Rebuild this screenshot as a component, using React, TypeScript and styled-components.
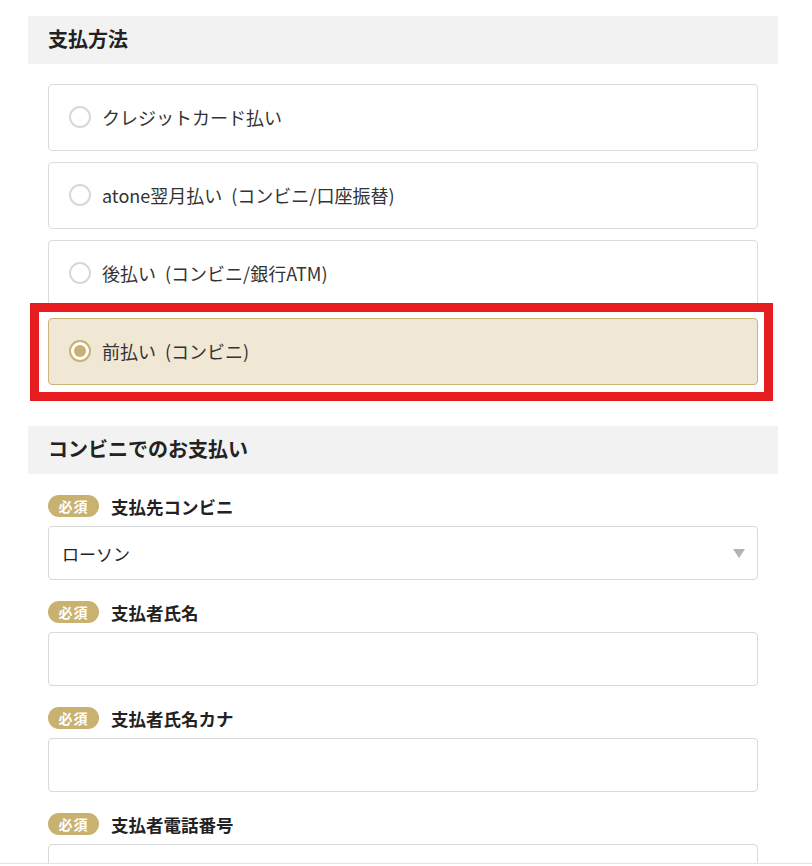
import React from "react";
import styled, { createGlobalStyle } from "styled-components";

const Global = createGlobalStyle`
  html, body { margin: 0; padding: 0; background: #fff; }
  body {
    font-family: "Noto Sans CJK JP", "Noto Sans", sans-serif;
    color: #333;
  }
  * { box-sizing: border-box; }
`;

const Page = styled.div`
  width: 750px;
  margin-left: 28px;
  padding-top: 16px;
`;

const SectionHeader = styled.h2<{ $top?: number }>`
  margin: ${(p) => p.$top ?? 0}px 0 0;
  height: 48px;
  background: #f2f2f2;
  display: flex;
  align-items: center;
  padding: 0 20px 3px;
  font-size: 20px;
  font-weight: 700;
  color: #222;
`;

const OptionList = styled.div`
  display: flex;
  flex-direction: column;
  gap: 11px;
  padding: 20px 20px 0;
`;

const Option = styled.label<{ $selected?: boolean }>`
  position: relative;
  display: flex;
  align-items: center;
  gap: 11px;
  height: 67px;
  padding: 0 20px 1px;
  border: 1px solid ${(p) => (p.$selected ? "#cdb57a" : "#dcdcdc")};
  border-radius: 4px;
  background: ${(p) => (p.$selected ? "#f0e7d5" : "#fff")};
  font-size: 18px;
  word-spacing: 5px;
  color: #333;
  cursor: pointer;
`;

const OptionText = styled.span`
  white-space: pre;
`;

const Radio = styled.span<{ $checked?: boolean }>`
  position: relative;
  flex: none;
  width: 22px;
  height: 22px;
  border-radius: 50%;
  border: 2px solid ${(p) => (p.$checked ? "#c9b16f" : "#d8d8d8")};
  background: #fff;
  &::after {
    content: "";
    display: ${(p) => (p.$checked ? "block" : "none")};
    position: absolute;
    left: 3px;
    top: 3px;
    width: 12px;
    height: 12px;
    border-radius: 50%;
    background: #c9b16f;
  }
`;

const RedFrame = styled.span`
  position: absolute;
  top: -16px;
  left: -19px;
  right: -16px;
  bottom: -17px;
  border: 9px solid #e61c1f;
  pointer-events: none;
`;

const Fields = styled.div`
  padding: 21px 20px 0;
`;

const Field = styled.div`
  margin-bottom: 21px;
`;

const LabelRow = styled.div`
  display: flex;
  align-items: center;
  gap: 12px;
  height: 22px;
  margin-bottom: 9px;
`;

const Badge = styled.span`
  display: inline-flex;
  align-items: center;
  justify-content: center;
  width: 51px;
  height: 22px;
  border-radius: 11px;
  background: #c9b16f;
  color: #fff;
  font-size: 14px;
  font-weight: 700;
  letter-spacing: 1px;
`;

const LabelText = styled.span`
  font-size: 17.5px;
  font-weight: 700;
  color: #222;
`;

const Box = styled.div`
  position: relative;
  height: 54px;
  border: 1px solid #d9d9d9;
  border-radius: 4px;
  background: #fff;
  display: flex;
  align-items: center;
  padding: 0 13px;
  font-size: 17px;
  color: #222;
`;

const Caret = styled.span`
  position: absolute;
  right: 12px;
  top: 22px;
  width: 0;
  height: 0;
  border-left: 6px solid transparent;
  border-right: 6px solid transparent;
  border-top: 9px solid #b3b3b3;
`;

const BottomEdge = styled.div`
  position: fixed;
  left: 0;
  right: 0;
  bottom: 0;
  height: 3px;
  background: #fff;
  border-top: 1px solid #e3e3e3;
`;

const options = [
  "クレジットカード払い",
  "atone翌月払い (コンビニ/口座振替)",
  "後払い (コンビニ/銀行ATM)",
  "前払い (コンビニ)",
];

const fields = [
  { label: "支払先コンビニ", value: "ローソン", select: true },
  { label: "支払者氏名", value: "" },
  { label: "支払者氏名カナ", value: "" },
  { label: "支払者電話番号", value: "" },
];

export default function App() {
  const selected = 3;
  return (
    <>
      <Global />
      <Page>
        <SectionHeader>支払方法</SectionHeader>
        <OptionList>
          {options.map((o, i) => (
            <Option key={o} $selected={i === selected}>
              <Radio $checked={i === selected} />
              <OptionText>{o}</OptionText>
              {i === selected && <RedFrame />}
            </Option>
          ))}
        </OptionList>
        <SectionHeader $top={41}>コンビニでのお支払い</SectionHeader>
        <Fields>
          {fields.map((f) => (
            <Field key={f.label}>
              <LabelRow>
                <Badge>必須</Badge>
                <LabelText>{f.label}</LabelText>
              </LabelRow>
              <Box>
                {f.value}
                {f.select && <Caret />}
              </Box>
            </Field>
          ))}
        </Fields>
      </Page>
      <BottomEdge />
    </>
  );
}
